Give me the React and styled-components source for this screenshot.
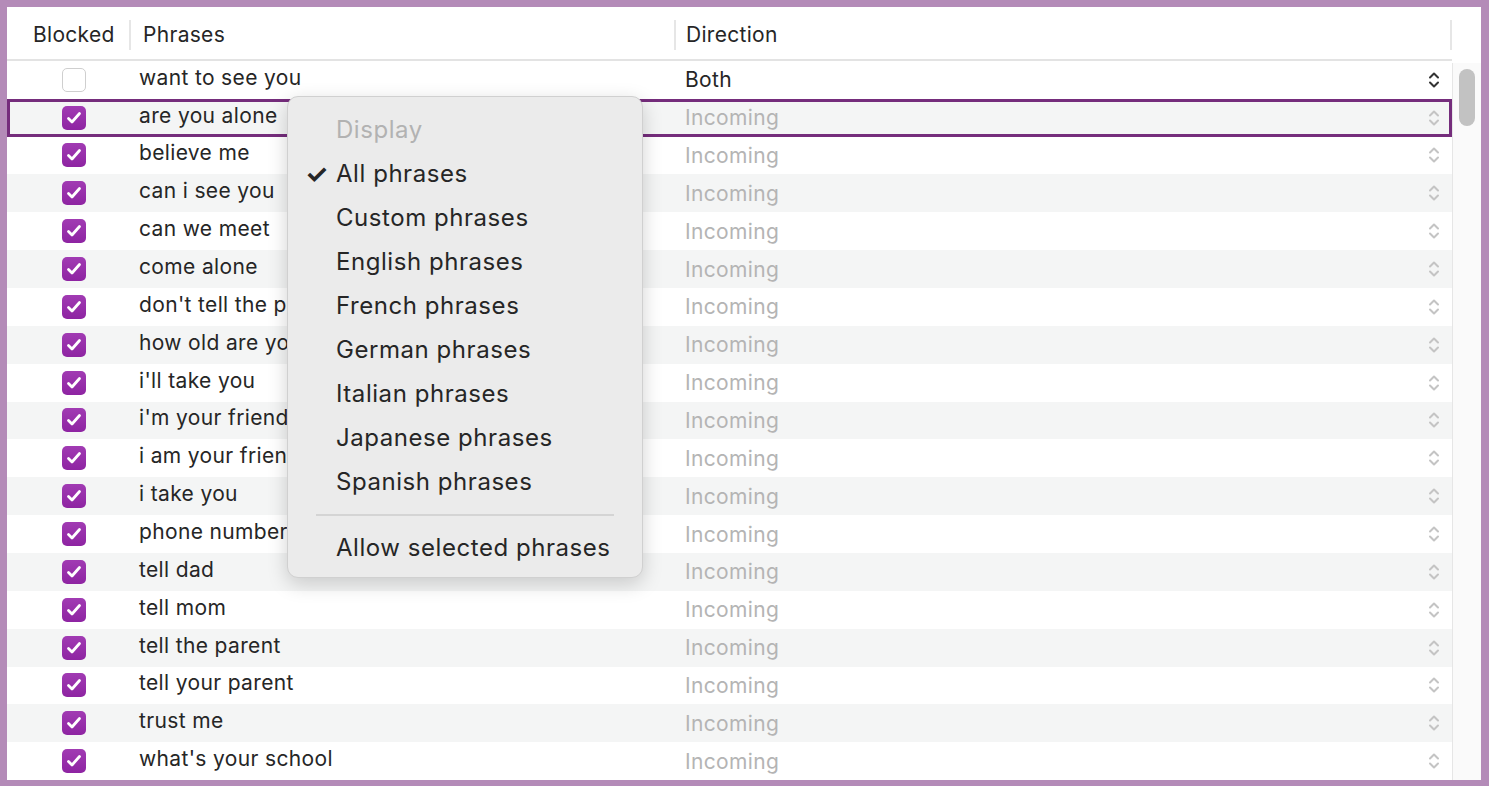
import React from "react";
import styled, { createGlobalStyle } from "styled-components";

const Global = createGlobalStyle`
  html, body { margin: 0; padding: 0; background: #b48bb8; }
  * { box-sizing: border-box; }
  body { font-family: Inter, "Noto Sans", "Liberation Sans", sans-serif; }
`;

const Frame = styled.div`
  position: relative;
  width: 1489px;
  height: 786px;
  padding: 7px 8px 6px 7px;
  background: #b48bb8;
  border-radius: 10px;
`;

const Inner = styled.div`
  display: flex;
  height: 100%;
  background: #fff;
  overflow: hidden;
`;

const Table = styled.div`
  flex: 1;
  display: flex;
  flex-direction: column;
`;

const Cols = "124px 545px 1fr";

const Header = styled.div`
  display: grid;
  grid-template-columns: ${Cols};
  height: 54px;
  border-bottom: 2px solid #e3e3e3;
  align-items: center;
`;

const HeadCell = styled.div`
  font-size: 21px;
  letter-spacing: 0.3px;
  color: #262626;
  padding-left: ${(p) => p.$pad}px;
  border-right: 2px solid ${(p) => (p.$sep ? "#e6e6e6" : "transparent")};
  height: 30px;
  line-height: 30px;
  margin-top: 4px;
`;

const Row = styled.div`
  position: relative;
  display: grid;
  grid-template-columns: ${Cols};
  height: 38px;
  align-items: center;
  background: ${(p) => (p.$alt ? "#f4f5f5" : "#fff")};
  outline: ${(p) => (p.$sel ? "3px solid #752d7c" : "none")};
  outline-offset: -3px;
  z-index: ${(p) => (p.$sel ? 1 : 0)};
`;

const CheckCell = styled.div`
  display: flex;
  justify-content: center;
  padding-left: 10px;
`;

const Box = styled.div`
  width: 24px;
  height: 24px;
  border-radius: 5px;
  display: flex;
  align-items: center;
  justify-content: center;
  background: ${(p) => (p.$on ? "linear-gradient(#a13bb3, #8e24a2)" : "#fff")};
  border: ${(p) => (p.$on ? "none" : "1px solid #cfcfcf")};
`;

const Phrase = styled.div`
  font-size: 21px;
  letter-spacing: 0.35px;
  color: #262626;
  padding-left: 8px;
  margin-top: -5px;
  white-space: nowrap;
`;

const Dir = styled.div`
  display: flex;
  justify-content: space-between;
  align-items: center;
  padding: 0 12px 0 9px;
  font-size: 21px;
  letter-spacing: 0.35px;
  color: ${(p) => (p.$dim ? "#b4b4b4" : "#262626")};
`;

const Scroll = styled.div`
  width: 29px;
  border-left: 1px solid #e6e6e6;
  margin-top: 56px;
  background: #fafafa;
  padding: 6px 0 0 6px;
`;

const Thumb = styled.div`
  width: 16px;
  height: 57px;
  border-radius: 8px;
  background: #c2c2c2;
`;

const Menu = styled.div`
  position: absolute;
  left: 287px;
  top: 96px;
  width: 356px;
  height: 482px;
  background: #ebebeb;
  border: 1px solid #d0d0d0;
  border-radius: 11px;
  box-shadow: 0 6px 20px rgba(0, 0, 0, 0.18);
  padding: 11px 0 0;
  z-index: 5;
`;

const Item = styled.div`
  position: relative;
  height: 44px;
  line-height: 44px;
  padding-left: 48px;
  font-size: 24px;
  letter-spacing: 0.55px;
  color: ${(p) => (p.$dim ? "#b2b2b2" : "#262626")};
`;

const Tick = styled.span`
  position: absolute;
  left: 17px;
  top: 0;
  font-size: 26px;
  font-weight: 700;
`;

const Sep = styled.div`
  height: 2px;
  background: #d4d4d4;
  margin: 10px 28px 10px 28px;
`;

const Chevrons = ({ dim }) => (
  <svg width="12" height="18" viewBox="0 0 12 18" fill="none"
    stroke={dim ? "#c4c4c4" : "#333"} strokeWidth="2" strokeLinecap="round" strokeLinejoin="round">
    <path d="M2 6.5 6 2.5 10 6.5" />
    <path d="M2 11.5 6 15.5 10 11.5" />
  </svg>
);

const Check = () => (
  <svg width="16" height="14" viewBox="0 0 16 14" fill="none" stroke="#fff"
    strokeWidth="2.8" strokeLinecap="round" strokeLinejoin="round">
    <path d="M2.5 7.5 6 11 13.5 2.5" />
  </svg>
);

const phrases = [
  "want to see you", "are you alone", "believe me", "can i see you", "can we meet",
  "come alone", "don't tell the parent", "how old are you", "i'll take you",
  "i'm your friend", "i am your friend", "i take you", "phone number", "tell dad",
  "tell mom", "tell the parent", "tell your parent", "trust me", "what's your school",
];

const menuItems = [
  "Custom phrases", "English phrases", "French phrases", "German phrases",
  "Italian phrases", "Japanese phrases", "Spanish phrases",
];

export default function App() {
  return (
    <>
      <Global />
      <Frame>
        <Inner>
          <Table>
            <Header>
              <HeadCell $pad={26} $sep>Blocked</HeadCell>
              <HeadCell $pad={12} $sep>Phrases</HeadCell>
              <HeadCell $pad={10} $sep>Direction</HeadCell>
            </Header>
            {phrases.map((p, i) => (
              <Row key={p} $alt={i % 2 === 1} $sel={i === 1}>
                <CheckCell>
                  <Box $on={i > 0}>{i > 0 && <Check />}</Box>
                </CheckCell>
                <Phrase>{p}</Phrase>
                <Dir $dim={i > 0}>
                  {i === 0 ? "Both" : "Incoming"}
                  <Chevrons dim={i > 0} />
                </Dir>
              </Row>
            ))}
          </Table>
          <Scroll>
            <Thumb />
          </Scroll>
        </Inner>
        <Menu>
          <Item $dim>Display</Item>
          <Item><Tick>✓</Tick>All phrases</Item>
          {menuItems.map((m) => (
            <Item key={m}>{m}</Item>
          ))}
          <Sep />
          <Item>Allow selected phrases</Item>
        </Menu>
      </Frame>
    </>
  );
}
